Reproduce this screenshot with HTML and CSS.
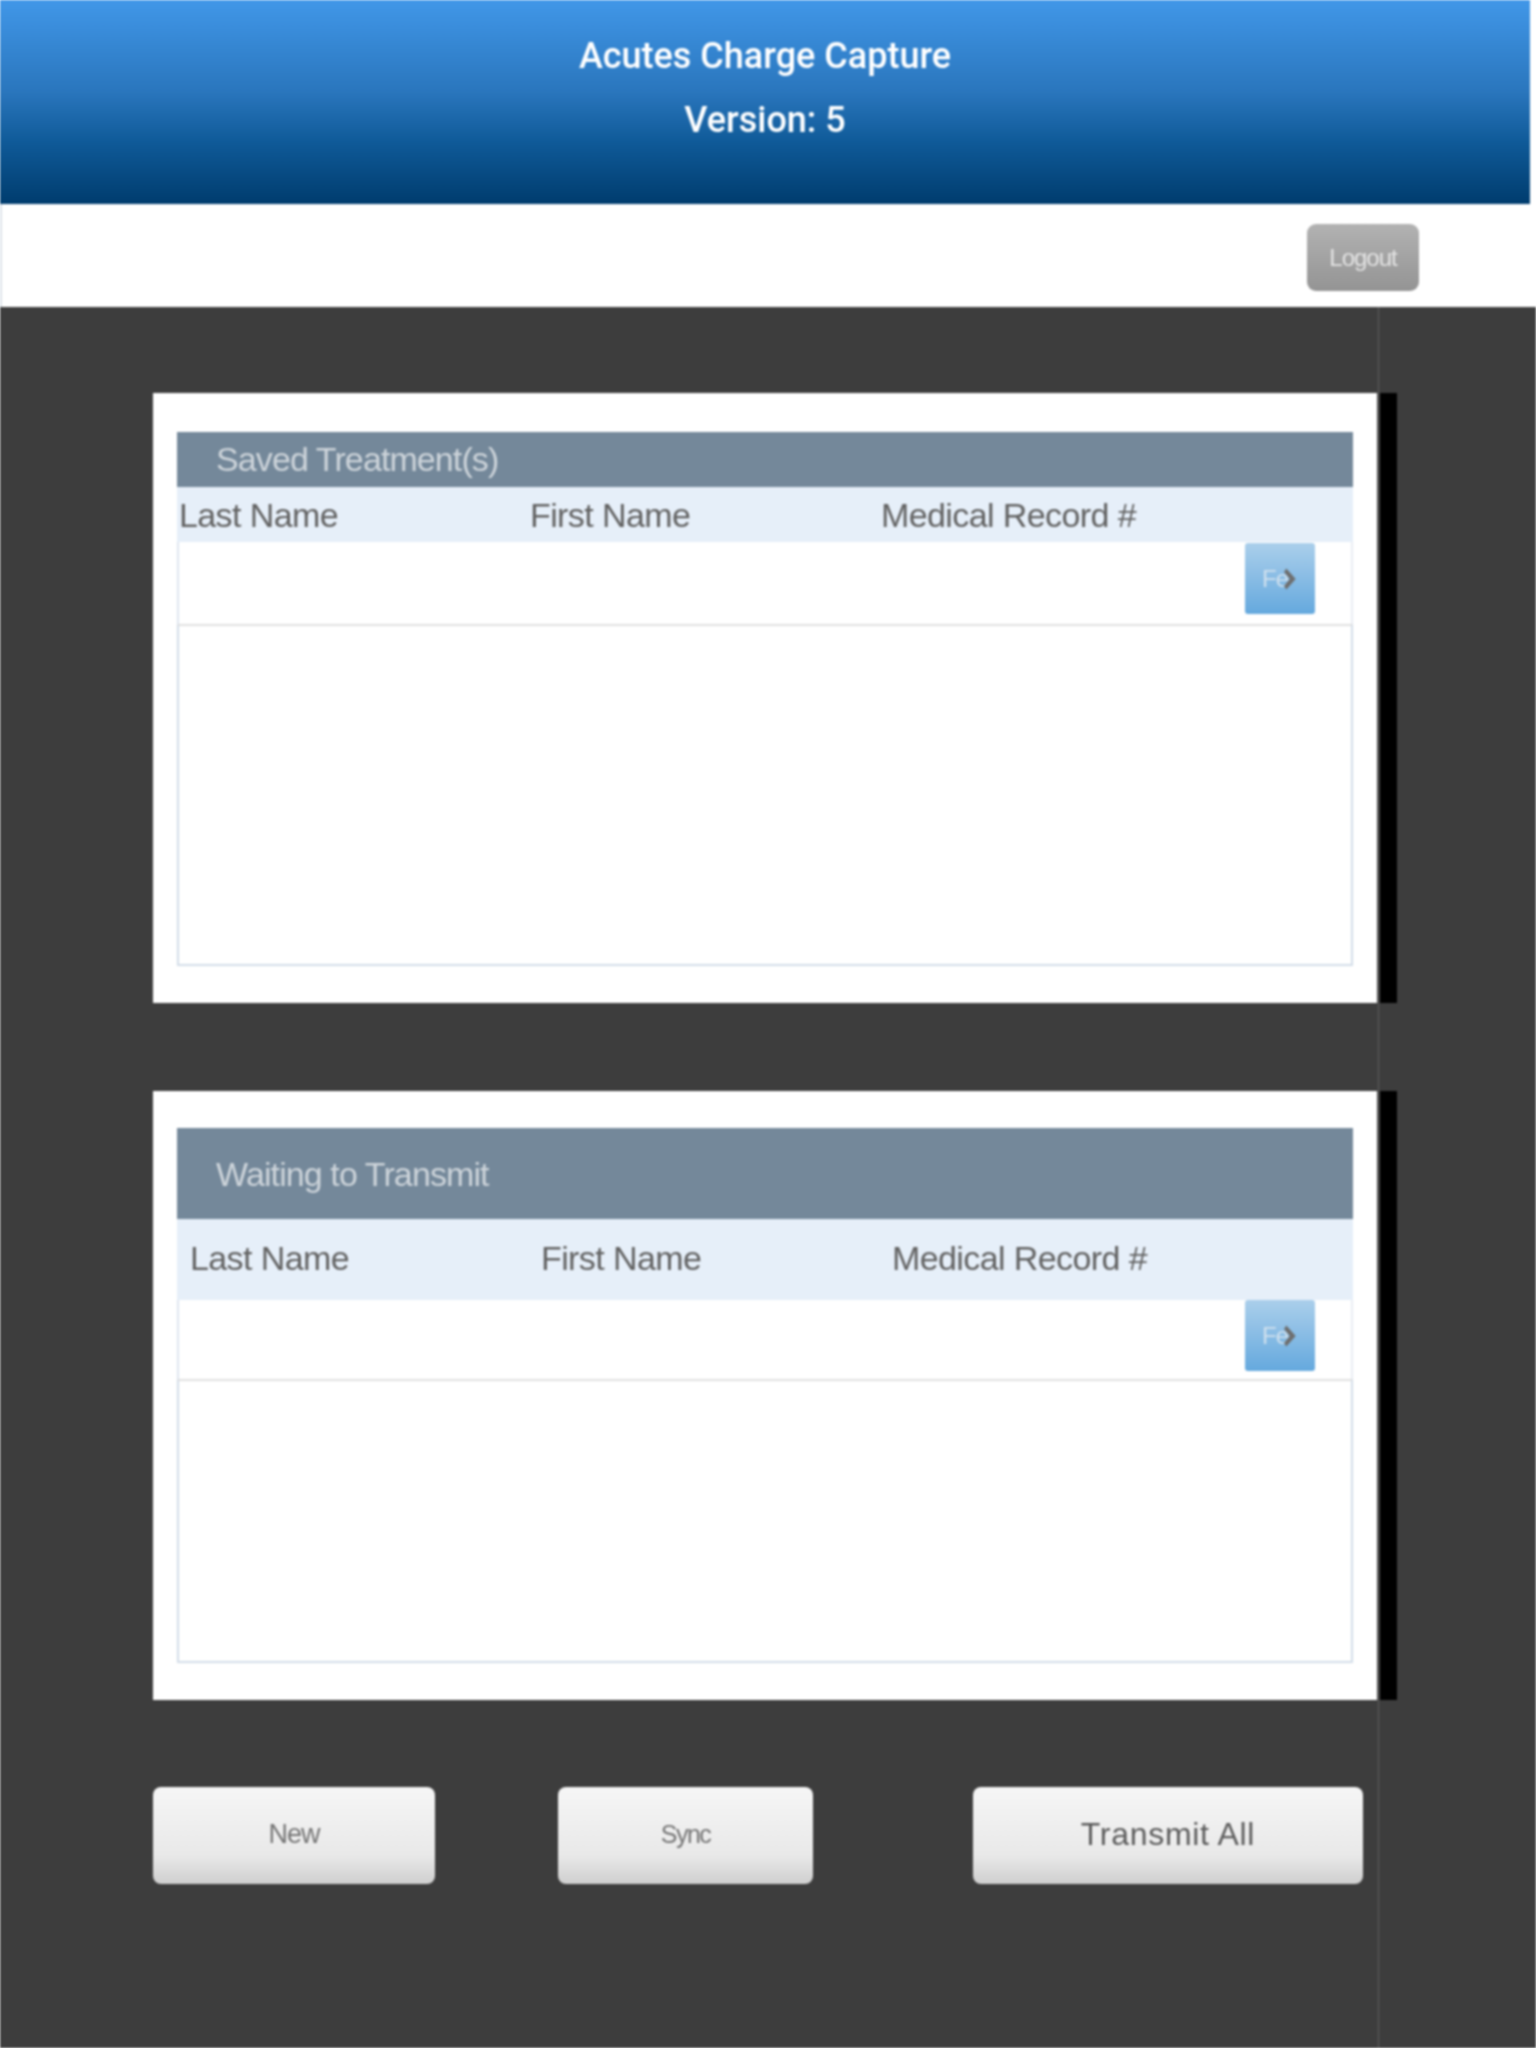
FILE: index.html
```html
<!DOCTYPE html>
<html lang="en">
<head>
    <meta charset="UTF-8">
    <meta name="viewport" content="width=device-width, initial-scale=1.0">
    <link rel="stylesheet" href="styles.css">
    <title>Acutes Charge Capture</title>
</head>
<body>
    <div class="page">
        <div class="top">
            <div id="title">
                <h1>Acutes Charge Capture</h1>
                <h2>Version: 5</h2>
            </div>
            <div id="toolbar">
                <button class="logout">Logout</button>
            </div>
        </div>
        <div id="content">
            <div class="panel first">
                <div class="panelTitle saved">Saved Treatment(s)</div>
                <div class="cols saved">
                    <span>Last Name</span><span>First Name</span><span>Medical Record #</span>
                </div>
                <div class="filterRow saved">
                    <button class="filter">Fe<svg viewBox="0 0 12 20" width="14" height="24"><path d="M2 1 L10 10 L2 19 L0 16 L5 10 L0 4 Z" fill="#6e6e6e"/></svg></button>
                </div>
                <div class="list savedList"></div>
            </div>
            <div class="panel second">
                <div class="panelTitle waiting">Waiting to Transmit</div>
                <div class="cols waiting">
                    <span>Last Name</span><span>First Name</span><span>Medical Record #</span>
                </div>
                <div class="filterRow waiting">
                    <button class="filter">Fe<svg viewBox="0 0 12 20" width="14" height="24"><path d="M2 1 L10 10 L2 19 L0 16 L5 10 L0 4 Z" fill="#6e6e6e"/></svg></button>
                </div>
                <div class="list waitingList"></div>
            </div>
            <div id="actions">
                <button class="action new">New</button>
                <button class="action sync">Sync</button>
                <button class="action transmit">Transmit All</button>
            </div>
        </div>
    </div>
</body>
</html>
```

FILE: styles.css
```css
html, body{margin: 0; padding: 0; background-color: #fff;}
.page{width: 1536px; height: 2048px; overflow: hidden; filter: blur(0.8px); font-family: "Liberation Sans", Arial, sans-serif; background-image: linear-gradient(#fff 307px, #3d3d3d 307px);}
.top{width: 1530px;}
#title{height: 204px; box-sizing: border-box; padding-top: 35px; text-align: center; color: #fff; background-image: linear-gradient(#4197e8, #2a76bd 45%, #0f5a98 70%, #003c6e);}
h1, h2{margin: 0; font-family: "Roboto", sans-serif; font-weight: 500; font-size: 36px; line-height: 42px;}
h2{margin-top: 22px;}
#toolbar{height: 103px; box-sizing: border-box; padding: 20px 111px 0 0; display: flex; justify-content: flex-end; align-items: flex-start; background-color: #fff; border-left: 2px solid #dde3ea;}
.logout{width: 112px; height: 67px; padding: 0; border: none; border-radius: 9px; color: #e4e4e4; font-family: inherit; font-size: 24px; letter-spacing: -1px; background-image: linear-gradient(#b2b2b2, #949494);}
#content{width: 1379px; height: 1741px; box-sizing: border-box; padding: 86px 0 0 153px; background-color: #3d3d3d; border-right: 1px solid #5e5e5e;}
.panel{width: 1224px; box-sizing: border-box; padding-left: 24px; padding-right: 24px; background-color: #fff; box-shadow: 3px 0 0 #4a4a4a, 20px 0 0 #000;}
.first{height: 610px; padding-top: 39px;}
.second{height: 609px; margin-top: 88px; padding-top: 37px;}
.panelTitle{padding-left: 39px; color: #cdd4da; background-color: #74889a; font-size: 34px; font-weight: normal; letter-spacing: -0.9px;}
.panelTitle.saved{height: 55px; line-height: 55px;}
.panelTitle.waiting{height: 91px; line-height: 93px;}
.cols{display: grid; grid-template-columns: 351px 351px 1fr; color: #626262; background-color: #e6eff9; font-size: 34px; letter-spacing: -0.6px;}
.cols.saved{height: 55px; line-height: 56px; padding-left: 2px;}
.cols.waiting{height: 81px; line-height: 79px; padding-left: 13px;}
.filterRow{box-sizing: border-box; padding-right: 36px; display: flex; justify-content: flex-end; align-items: flex-start; border-left: 2px solid #dfe6ef; border-right: 2px solid #e8edf3;}
.filterRow.saved{height: 82px; padding-top: 1px;}
.filterRow.waiting{height: 79px;}
.filter{width: 70px; height: 71px; padding: 0; border: none; border-radius: 3px; display: flex; align-items: center; justify-content: center; color: #cfe0ee; font-family: inherit; font-size: 24px; letter-spacing: -1px; background-image: linear-gradient(#abcfeb, #65a9de);}
.filter svg{margin-left: -4px;}
.list{box-sizing: border-box; background-color: #fff; border: 2px solid #d3dde8; border-top-color: #e0e0e0;}
.savedList{height: 342px;}
.waitingList{height: 284px;}
#actions{display: flex; align-items: flex-start; margin-top: 87px;}
.action{height: 97px; padding: 0 0 3px; border: none; border-radius: 8px; color: #757575; font-family: inherit; font-size: 27px; letter-spacing: -1px; background-image: linear-gradient(#f6f6f6, #e9e9e9 70%, #cfcfcf);}
.new{width: 282px;}
.sync{width: 255px; margin-left: 123px; font-size: 25px; letter-spacing: -1.5px;}
.transmit{width: 390px; margin-left: 160px; color: #5c5c5c; font-size: 32px; letter-spacing: 0.7px;}
```
